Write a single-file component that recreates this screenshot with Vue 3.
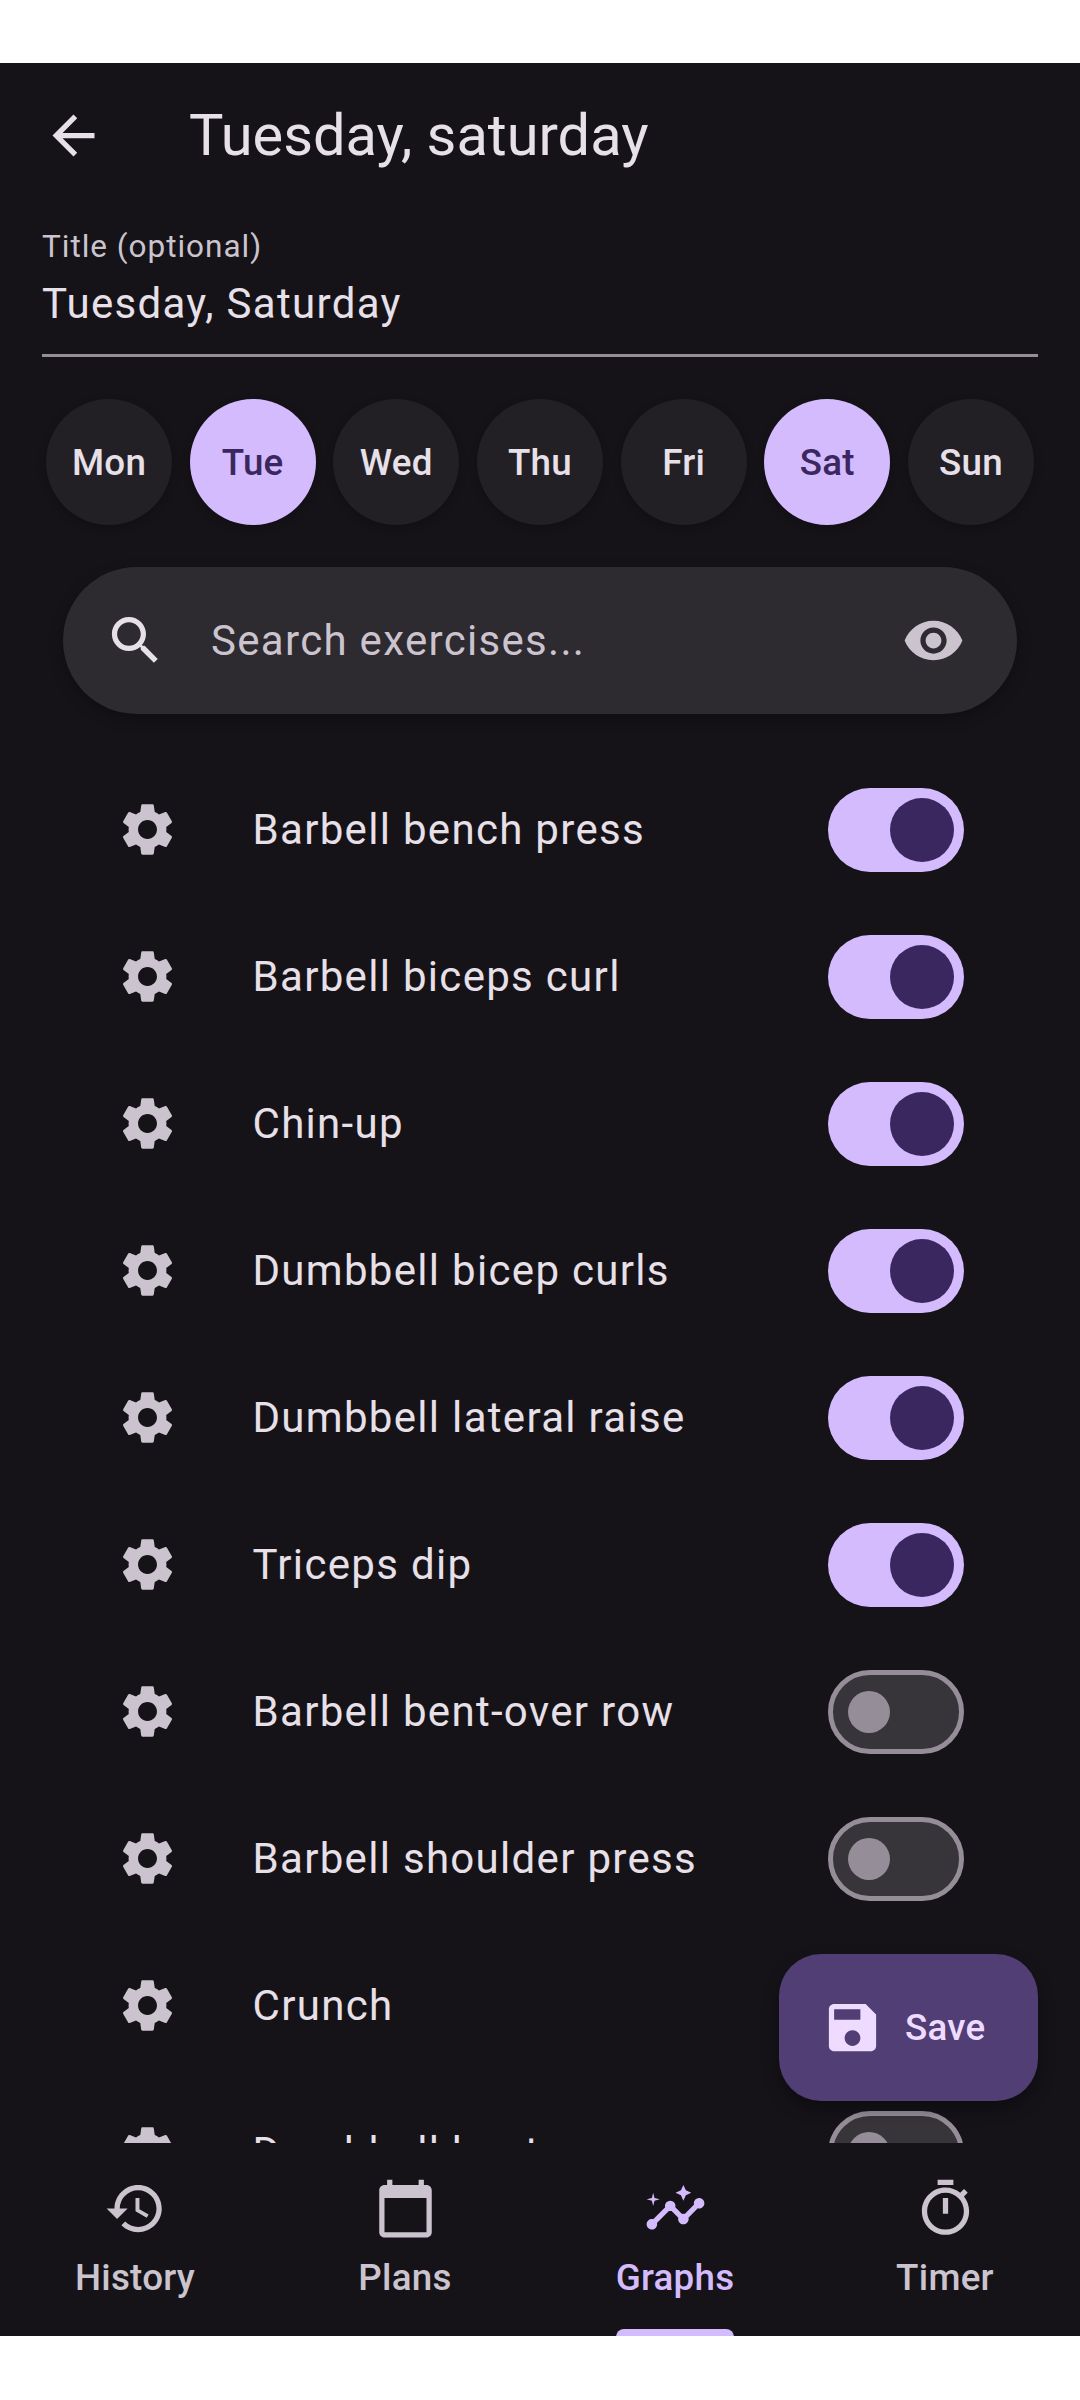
<script setup>
const days = [
  { label: 'Mon', on: false },
  { label: 'Tue', on: true },
  { label: 'Wed', on: false },
  { label: 'Thu', on: false },
  { label: 'Fri', on: false },
  { label: 'Sat', on: true },
  { label: 'Sun', on: false },
]
const exercises = [
  { name: 'Barbell bench press', on: true },
  { name: 'Barbell biceps curl', on: true },
  { name: 'Chin-up', on: true },
  { name: 'Dumbbell bicep curls', on: true },
  { name: 'Dumbbell lateral raise', on: true },
  { name: 'Triceps dip', on: true },
  { name: 'Barbell bent-over row', on: false },
  { name: 'Barbell shoulder press', on: false },
  { name: 'Crunch', on: false },
  { name: 'Dumbbell bent-over row', on: false },
]
const gear = 'M19.14 12.94c.04-.3.06-.61.06-.94 0-.32-.02-.64-.07-.94l2.03-1.58c.18-.14.23-.41.12-.61l-1.92-3.32c-.12-.22-.37-.29-.59-.22l-2.39.96c-.5-.38-1.03-.7-1.62-.94l-.36-2.54c-.04-.24-.24-.41-.48-.41h-3.84c-.24 0-.43.17-.47.41l-.36 2.54c-.59.24-1.13.57-1.62.94l-2.39-.96c-.22-.08-.47 0-.59.22L2.74 8.87c-.12.21-.08.47.12.61l2.03 1.58c-.05.3-.09.63-.09.94s.02.64.07.94l-2.03 1.58c-.18.14-.23.41-.12.61l1.92 3.32c.12.22.37.29.59.22l2.39-.96c.5.38 1.03.7 1.62.94l.36 2.54c.05.24.24.41.48.41h3.84c.24 0 .44-.17.47-.41l.36-2.54c.59-.24 1.13-.56 1.62-.94l2.39.96c.22.08.47 0 .59-.22l1.92-3.32c.12-.22.07-.47-.12-.61l-2.01-1.58zM12 15.6c-1.98 0-3.6-1.62-3.6-3.6s1.62-3.6 3.6-3.6 3.6 1.62 3.6 3.6-1.62 3.6-3.6 3.6z'
const tabs = [
  { label: 'History', active: false, d: 'M13 3c-4.97 0-9 4.03-9 9H1l3.89 3.89.07.14L9 12H6c0-3.87 3.13-7 7-7s7 3.13 7 7-3.13 7-7 7c-1.93 0-3.68-.79-4.94-2.06l-1.42 1.42C8.27 19.99 10.51 21 13 21c4.97 0 9-4.03 9-9s-4.03-9-9-9zm-1 5v5l4.28 2.54.72-1.21-3.5-2.08V8H12z' },
  { label: 'Plans', active: false, d: 'M20 3h-1V1h-2v2H7V1H5v2H4c-1.1 0-2 .9-2 2v16c0 1.1.9 2 2 2h16c1.1 0 2-.9 2-2V5c0-1.1-.9-2-2-2zm0 18H4V8h16v13z' },
  { label: 'Graphs', active: true, d: 'M21 8c-1.45 0-2.26 1.44-1.93 2.51l-3.55 3.56c-.3-.09-.74-.09-1.04 0l-2.55-2.55C12.27 10.45 11.46 9 10 9c-1.45 0-2.27 1.44-1.93 2.52l-4.56 4.55C2.44 15.74 1 16.55 1 18c0 1.1.9 2 2 2 1.45 0 2.26-1.44 1.93-2.51l4.55-4.56c.3.09.74.09 1.04 0l2.55 2.55C12.73 16.55 13.54 18 15 18c1.45 0 2.27-1.44 1.93-2.52l3.56-3.55c1.07.33 2.51-.48 2.51-1.93 0-1.1-.9-2-2-2zM15 9l.94-2.07L18 6l-2.06-.93L15 3l-.92 2.07L12 6l2.08.93zM3.5 11 4 9l2-.5L4 8l-.5-2L3 8l-2 .5L3 9z' },
  { label: 'Timer', active: false, d: 'M15 1H9v2h6V1zm-4 13h2V8h-2v6zm8.03-6.61l1.42-1.42c-.43-.51-.9-.99-1.41-1.41l-1.42 1.42C16.07 4.74 14.12 4 12 4c-4.97 0-9 4.03-9 9s4.02 9 9 9 9-4.03 9-9c0-2.12-.74-4.07-1.97-5.61zM12 20c-3.87 0-7-3.13-7-7s3.13-7 7-7 7 3.13 7 7-3.13 7-7 7z' },
]
</script>

<template>
  <div class="page">
    <div class="screen">
      <header class="appbar">
        <svg class="icon back" viewBox="0 0 24 24"><path d="M20 11H7.83l5.59-5.59L12 4l-8 8 8 8 1.41-1.41L7.83 13H20v-2z" /></svg>
        <h1 class="title">Tuesday, saturday</h1>
      </header>

      <div class="field">
        <div class="field-label">Title (optional)</div>
        <div class="field-value">Tuesday, Saturday</div>
      </div>

      <div class="days">
        <div v-for="d in days" :key="d.label" class="day" :class="{ on: d.on }">{{ d.label }}</div>
      </div>

      <div class="search">
        <svg class="icon search-icon" viewBox="0 0 24 24"><path d="M15.5 14h-.79l-.28-.27C15.41 12.59 16 11.11 16 9.5 16 5.91 13.09 3 9.5 3S3 5.91 3 9.5 5.91 16 9.5 16c1.61 0 3.09-.59 4.23-1.57l.27.28v.79l5 4.99L20.49 19l-4.99-5zm-6 0C7.01 14 5 11.99 5 9.5S7.01 5 9.5 5 14 7.01 14 9.5 11.99 14 9.5 14z" /></svg>
        <span class="search-text">Search exercises...</span>
        <svg class="icon eye" viewBox="0 0 24 24"><path d="M12 4.5C7 4.5 2.73 7.61 1 12c1.73 4.39 6 7.5 11 7.5s9.27-3.11 11-7.5c-1.73-4.39-6-7.5-11-7.5zM12 17c-2.76 0-5-2.24-5-5s2.24-5 5-5 5 2.24 5 5-2.24 5-5 5zm0-8c-1.66 0-3 1.34-3 3s1.34 3 3 3 3-1.34 3-3-1.34-3-3-3z" /></svg>
      </div>

      <div class="list">
        <div v-for="ex in exercises" :key="ex.name" class="row">
          <svg class="icon gear" viewBox="0 0 24 24"><path :d="gear" /></svg>
          <span class="row-name">{{ ex.name }}</span>
          <span class="switch" :class="{ on: ex.on }"><span class="thumb"></span></span>
        </div>
      </div>

      <nav class="tabs">
        <div v-for="t in tabs" :key="t.label" class="tab" :class="{ active: t.active }">
          <svg class="icon tab-icon" viewBox="0 0 24 24"><path :d="t.d" /></svg>
          <span class="tab-label">{{ t.label }}<i v-if="t.active" class="indicator"></i></span>
        </div>
      </nav>

      <button class="fab">
        <svg class="icon fab-icon" viewBox="0 0 24 24"><path d="M17 3H5c-1.11 0-2 .9-2 2v14c0 1.1.89 2 2 2h14c1.1 0 2-.9 2-2V7l-4-4zm-5 16c-1.66 0-3-1.34-3-3s1.34-3 3-3 3 1.34 3 3-1.34 3-3 3zm3-10H5V5h10v4z" /></svg>
        <span>Save</span>
      </button>
    </div>
  </div>
</template>

<style scoped>
.page {
  width: 1080px;
  height: 2400px;
  background: #fff;
  padding: 63px 0;
  box-sizing: border-box;
  font-family: Roboto, "Noto Sans", sans-serif;
}
.screen {
  position: relative;
  height: 2273px;
  background: #151318;
  color: #e8e0e8;
  display: flex;
  flex-direction: column;
  overflow: hidden;
}
.icon {
  width: 63px;
  height: 63px;
  fill: currentColor;
  flex: none;
  display: block;
}
.appbar {
  height: 144px;
  flex: none;
  display: flex;
  align-items: center;
  padding-left: 42px;
  box-sizing: border-box;
}
.title {
  margin: 0 0 0 84px;
  font-size: 57.75px;
  font-weight: 400;
  line-height: 76px;
}
.field {
  margin: 0 42px;
  height: 150px;
  flex: none;
  box-sizing: border-box;
  border-bottom: 3px solid #958e99;
  display: flex;
  flex-direction: column;
}
.field-label {
  font-size: 31.5px;
  letter-spacing: 0.98px;
  line-height: 40px;
  color: #cbc4cf;
  margin-top: 20px;
}
.field-value {
  font-size: 42px;
  letter-spacing: 1.31px;
  line-height: 56px;
  margin-top: 9px;
}
.days {
  display: flex;
  justify-content: space-between;
  padding: 0 46px;
  margin-top: 42px;
  flex: none;
}
.day {
  width: 126px;
  height: 126px;
  border-radius: 50%;
  background: #221f25;
  box-shadow: 0 3px 8px rgba(0, 0, 0, 0.22);
  display: flex;
  align-items: center;
  justify-content: center;
  font-size: 36.75px;
  font-weight: 500;
  letter-spacing: 0.26px;
}
.day.on {
  background: #d3bbfd;
  color: #3b2760;
}
.search {
  margin: 42px 63px 0;
  height: 147px;
  flex: none;
  border-radius: 74px;
  background: #2d2a30;
  box-shadow: 0 5px 14px rgba(0, 0, 0, 0.3);
  display: flex;
  align-items: center;
  padding: 0 52px 0 41px;
  box-sizing: border-box;
}
.search-text {
  flex: 1;
  margin-left: 44px;
  font-size: 42px;
  letter-spacing: 1.31px;
  color: #cbc4cf;
  margin-bottom: 1px;
}
.eye {
  color: #cbc4cf;
}
.list {
  margin-top: 41.5px;
  flex: 1;
  min-height: 0;
  overflow: hidden;
}
.row {
  height: 147px;
  display: flex;
  align-items: center;
  padding: 0 116px 0 115.5px;
}
.gear {
  color: #cbc4cf;
}
.row-name {
  flex: 1;
  margin-left: 74px;
  font-size: 42px;
  letter-spacing: 1.31px;
}
.switch {
  width: 136.5px;
  height: 84px;
  margin-top: 2px;
  border-radius: 42px;
  box-sizing: border-box;
  background: #37343a;
  border: 5.25px solid #958e99;
  display: flex;
  align-items: center;
  padding-left: 15px;
}
.thumb {
  width: 42px;
  height: 42px;
  border-radius: 50%;
  background: #958e99;
}
.switch.on {
  background: #d3bbfd;
  border: none;
  padding-left: 62px;
}
.switch.on .thumb {
  width: 64px;
  height: 64px;
  background: #3b2760;
}
.tabs {
  height: 193px;
  flex: none;
  display: grid;
  grid-template-columns: repeat(4, 270px);
  background: #151318;
  position: relative;
}
.tab {
  display: flex;
  flex-direction: column;
  align-items: center;
  color: #cbc4cf;
  padding-top: 34px;
}
.tab.active {
  color: #d3bbfd;
}
.tab-label {
  position: relative;
  display: block;
  margin-top: 14px;
  font-size: 36.75px;
  font-weight: 500;
  letter-spacing: 0.26px;
  line-height: 48px;
}
.indicator {
  position: absolute;
  left: 0;
  right: 0;
  top: 75px;
  height: 8px;
  background: #d3bbfd;
  border-radius: 8px 8px 0 0;
}
.fab {
  position: absolute;
  right: 42px;
  bottom: 235.5px;
  height: 147px;
  border: none;
  border-radius: 42px;
  background: #513e74;
  color: #eedbff;
  box-shadow: 0 8px 16px rgba(0, 0, 0, 0.35);
  display: flex;
  align-items: center;
  gap: 21px;
  padding: 0 52.5px 0 42px;
  font-family: inherit;
  font-size: 36.75px;
  font-weight: 500;
  letter-spacing: 0.26px;
}
</style>
